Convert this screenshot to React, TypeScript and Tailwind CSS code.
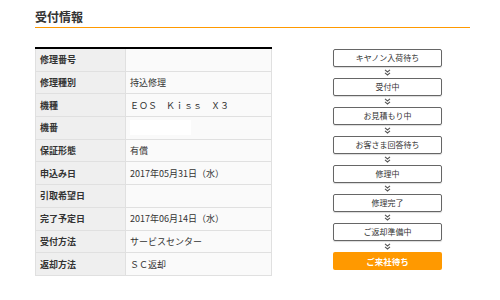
import React from "react";

const rows: { label: string; value: string; masked?: boolean }[] = [
  { label: "修理番号", value: "" },
  { label: "修理種別", value: "持込修理" },
  { label: "機種", value: "ＥＯＳ　Ｋｉｓｓ　Ｘ３" },
  { label: "機番", value: "", masked: true },
  { label: "保証形態", value: "有償" },
  { label: "申込み日", value: "2017年05月31日（水）" },
  { label: "引取希望日", value: "" },
  { label: "完了予定日", value: "2017年06月14日（水）" },
  { label: "受付方法", value: "サービスセンター" },
  { label: "返却方法", value: "ＳＣ返却" },
];

const steps = [
  "キヤノン入荷待ち",
  "受付中",
  "お見積もり中",
  "お客さま回答待ち",
  "修理中",
  "修理完了",
  "ご返却準備中",
];

function Chevron() {
  return (
    <div className="flex h-[11px] items-center justify-center">
      <svg width="7" height="7" viewBox="0 0 7 7" fill="none" stroke="#555" strokeWidth="1.1">
        <polyline points="1,0.8 3.5,3 6,0.8" />
        <polyline points="1,3.8 3.5,6 6,3.8" />
      </svg>
    </div>
  );
}

export default function App() {
  return (
    <div
      className="h-[300px] w-[500px] bg-white text-[#333]"
      style={{ fontFamily: '"Noto Sans CJK JP", "Liberation Sans", sans-serif' }}
    >
      <div className="ml-[35px] w-[435px] pt-[9px]">
        {/* Title */}
        <h1 className="h-[16px] text-[12px] font-bold leading-[16px]">受付情報</h1>
        <div className="mt-[2px] h-[1px] bg-[#ff9900]" />

        <div className="mt-[19px] flex">
          {/* Info table */}
          <div className="w-[237px] border-t-2 border-black">
            {rows.map((r) => (
              <div
                key={r.label}
                className="flex h-[22.7px] border-x border-b border-[#e0e0e0] text-[9px] leading-none"
              >
                <div className="flex w-[90px] items-center border-r border-[#e0e0e0] bg-[#efefef] pl-[4px] font-bold">
                  {r.label}
                </div>
                <div className="flex flex-1 items-center bg-[#fafafa] pl-[4px]">
                  {r.masked ? <div className="h-[15px] w-[61px] bg-white" /> : <span>{r.value}</span>}
                </div>
              </div>
            ))}
          </div>

          {/* Status flow */}
          <div className="ml-[61px] mt-[2px] w-[109px]">
            {steps.map((s) => (
              <div key={s}>
                <div className="flex h-[18px] items-center justify-center rounded-[2px] border border-[#666] bg-white text-[8px] leading-none shadow-[0_1px_1px_rgba(0,0,0,0.15)]">
                  {s}
                </div>
                <Chevron />
              </div>
            ))}
            <div className="flex h-[18px] items-center justify-center rounded-[2px] bg-[#ff9900] text-[8.5px] font-bold leading-none text-white">
              ご来社待ち
            </div>
          </div>
        </div>
      </div>
    </div>
  );
}
